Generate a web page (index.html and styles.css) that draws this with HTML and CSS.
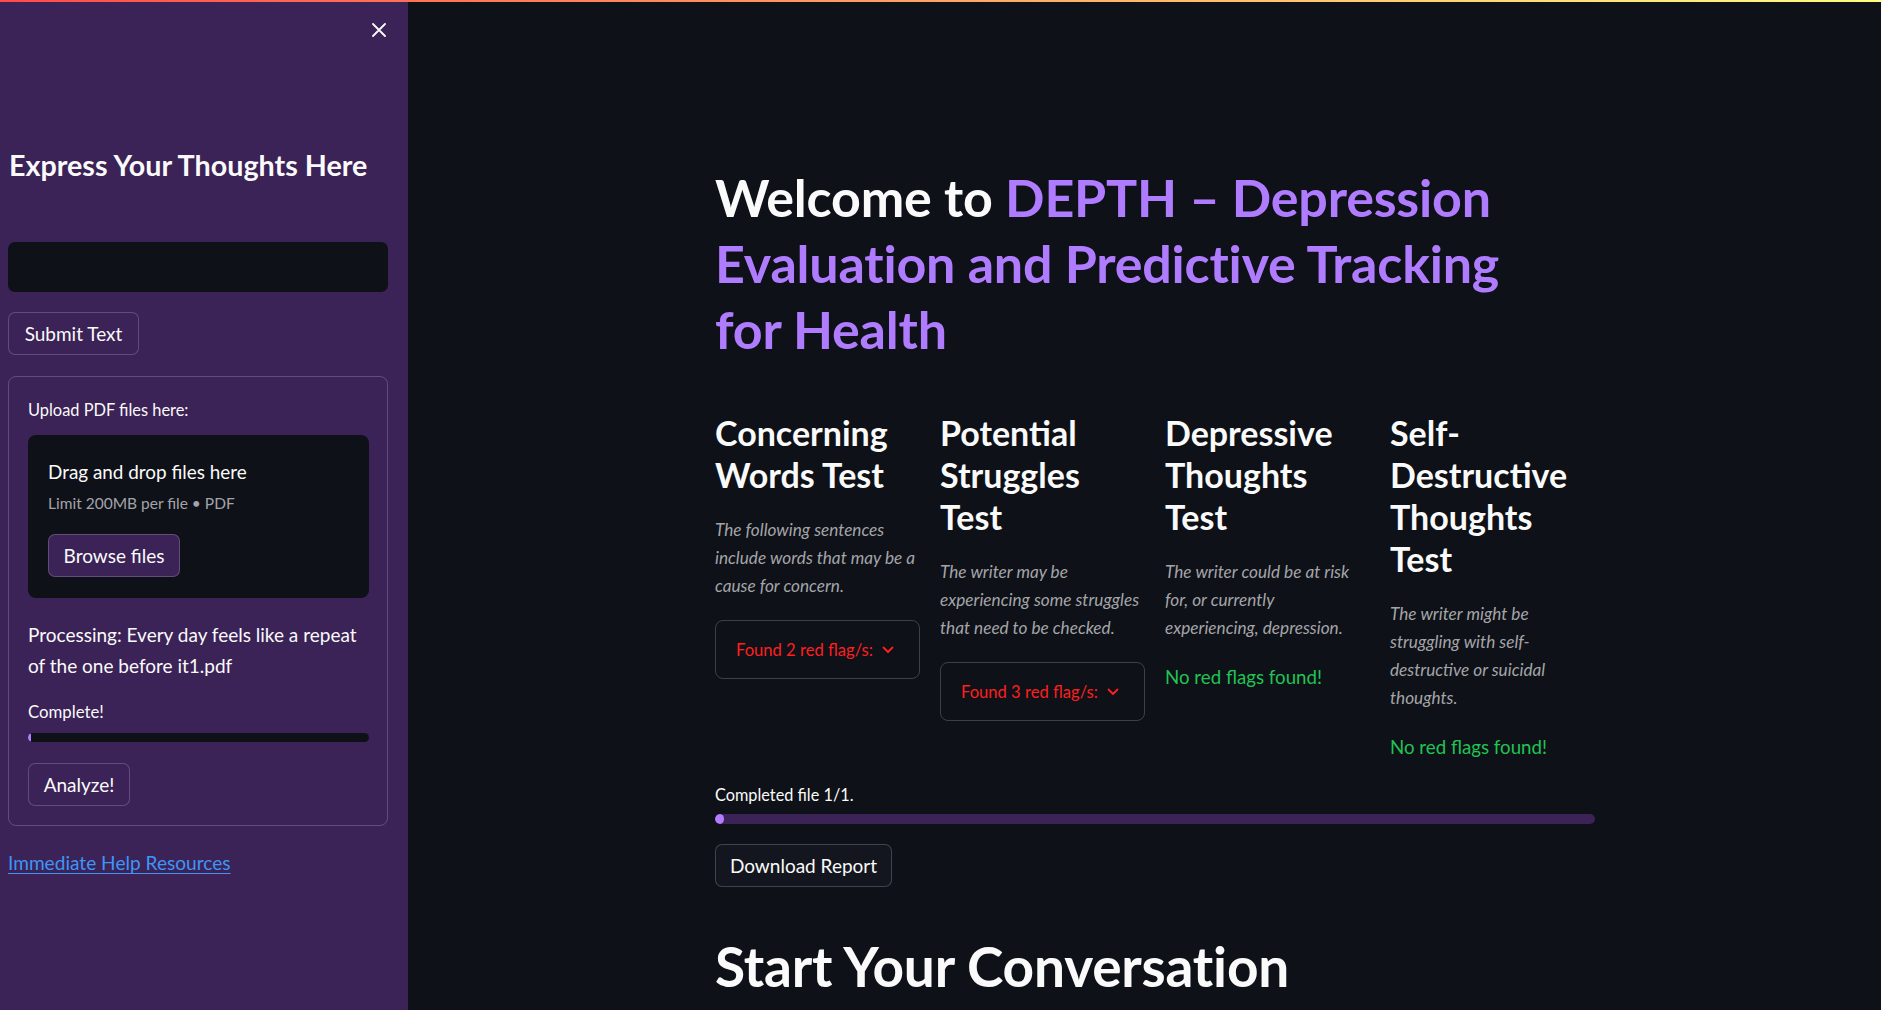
FILE: index.html
```html
<!DOCTYPE html>
<html lang="en">
<head>
<meta charset="utf-8">
<title>DEPTH</title>
<link rel="stylesheet" href="styles.css">
</head>
<body>
<div class="decoration"></div>
<div class="app">
  <aside class="sidebar">
    <div class="sidebar-top">
      <button class="close" aria-label="Close sidebar">
        <svg width="14" height="14" viewBox="0 0 14 14"><path d="M1 1L13 13M13 1L1 13" stroke="#fafafa" stroke-width="1.8" stroke-linecap="round"/></svg>
      </button>
    </div>
    <h2 class="side-title">Express Your Thoughts Here</h2>
    <div class="textbox"></div>
    <button class="btn btn-submit">Submit Text</button>
    <div class="form">
      <div class="label">Upload PDF files here:</div>
      <div class="dropzone">
        <div class="dz-title">Drag and drop files here</div>
        <div class="dz-sub">Limit 200MB per file • PDF</div>
        <button class="btn btn-browse">Browse files</button>
      </div>
      <p class="processing">Processing: Every day feels like a repeat of the one before it1.pdf</p>
      <div class="prog-label">Complete!</div>
      <div class="progress progress-dark"><div class="progress-fill"></div></div>
      <button class="btn btn-analyze">Analyze!</button>
    </div>
    <a class="help" href="#">Immediate Help Resources</a>
  </aside>

  <main class="main">
    <div class="content">
      <h1 class="title title-welcome">Welcome to <span class="accent">DEPTH – Depression</span> <span class="accent">Evaluation and Predictive Tracking</span> <span class="accent">for Health</span></h1>

      <div class="tests">
        <section class="test">
          <h3 class="test-title">Concerning Words Test</h3>
          <p class="test-desc">The following sentences include words that may be a cause for concern.</p>
          <div class="expander"><span>Found 2 red flag/s:</span>
            <svg width="12" height="8" viewBox="0 0 12 8"><path d="M1.5 1.5L6 6L10.5 1.5" fill="none" stroke="#ff1f1f" stroke-width="1.8" stroke-linecap="round" stroke-linejoin="round"/></svg>
          </div>
        </section>
        <section class="test">
          <h3 class="test-title">Potential Struggles Test</h3>
          <p class="test-desc">The writer may be experiencing some struggles that need to be checked.</p>
          <div class="expander"><span>Found 3 red flag/s:</span>
            <svg width="12" height="8" viewBox="0 0 12 8"><path d="M1.5 1.5L6 6L10.5 1.5" fill="none" stroke="#ff1f1f" stroke-width="1.8" stroke-linecap="round" stroke-linejoin="round"/></svg>
          </div>
        </section>
        <section class="test">
          <h3 class="test-title">Depressive Thoughts Test</h3>
          <p class="test-desc">The writer could be at risk for, or currently experiencing, depression.</p>
          <p class="ok">No red flags found!</p>
        </section>
        <section class="test">
          <h3 class="test-title">Self-Destructive Thoughts Test</h3>
          <p class="test-desc">The writer might be struggling with self-destructive or suicidal thoughts.</p>
          <p class="ok">No red flags found!</p>
        </section>
      </div>

      <div class="completed">Completed file 1/1.</div>
      <div class="progress progress-main"><div class="progress-fill progress-fill-main"></div></div>
      <button class="btn btn-download">Download Report</button>

      <h1 class="title title-conv">Start Your Conversation</h1>
    </div>
  </main>
</div>
</body>
</html>
```

FILE: styles.css
```css
* { box-sizing: border-box; }

html, body {
  margin: 0;
  height: 100%;
}

body {
  background: #0e1117;
  color: #fafafa;
  font-family: "Source Sans Pro", "Lato", "Noto Sans", sans-serif;
  overflow: hidden;
  position: relative;
}

.decoration {
  position: absolute;
  top: 0;
  left: 0;
  right: 0;
  height: 2px;
  background: linear-gradient(90deg, #ff4b4b, #fffd80);
  z-index: 10;
}

.app {
  display: flex;
  height: 1010px;
}

/* ---------- Sidebar ---------- */
.sidebar {
  width: 408px;
  flex: none;
  background: #3b2257;
  padding: 0 20px 0 8px;
  display: flex;
  flex-direction: column;
  align-items: flex-start;
}

.sidebar-top {
  align-self: stretch;
  display: flex;
  justify-content: flex-end;
  padding-top: 23px;
  padding-right: 2px;
}

.close {
  background: none;
  border: 0;
  padding: 0;
  width: 14px;
  height: 14px;
  display: flex;
}

.side-title {
  margin: 111px 0 0 1px;
  font-size: 28.7px;
  line-height: 34px;
  font-weight: 700;
}

.textbox {
  align-self: stretch;
  margin-top: 60px;
  height: 50px;
  background: #0e1117;
  border-radius: 7px;
}

.btn {
  font-family: inherit;
  font-size: 19px;
  color: #fafafa;
  background: #3b2257;
  border: 1px solid rgba(250, 250, 250, 0.2);
  border-radius: 7px;
  height: 43px;
  padding: 0;
  line-height: 41px;
  text-align: center;
}

.btn-submit {
  margin-top: 20px;
  width: 131px;
}

.form {
  align-self: stretch;
  margin-top: 21px;
  border: 1px solid rgba(250, 250, 250, 0.2);
  border-radius: 8px;
  padding: 21px 18px 19px 19px;
  display: flex;
  flex-direction: column;
  align-items: flex-start;
}

.label {
  font-size: 16.4px;
  line-height: 24px;
}

.dropzone {
  align-self: stretch;
  margin-top: 13px;
  background: #0e1117;
  border-radius: 8px;
  padding: 24px 20px 21px 20px;
  display: flex;
  flex-direction: column;
  align-items: flex-start;
}

.dz-title {
  font-size: 18.9px;
  line-height: 26px;
}

.dz-sub {
  margin-top: 6px;
  font-size: 15.5px;
  line-height: 24px;
  color: #a3a4ab;
}

.btn-browse {
  margin-top: 19px;
  width: 132px;
}

.processing {
  margin: 21px 0 0;
  font-size: 19px;
  line-height: 31px;
}

.prog-label {
  margin-top: 19px;
  font-size: 16.8px;
  line-height: 24px;
}

.progress {
  align-self: stretch;
  border-radius: 5px;
  overflow: hidden;
  display: flex;
}

.progress-dark {
  margin-top: 9px;
  height: 9px;
  background: #0e1117;
}

.progress-fill {
  width: 3px;
  background: #b47cff;
  border-radius: 5px;
}

.btn-analyze {
  margin-top: 21px;
  width: 102px;
}

.help {
  margin-top: 22px;
  font-size: 19.1px;
  line-height: 30px;
  color: #3f95f5;
  text-decoration: underline;
  text-underline-offset: 3px;
}

/* ---------- Main ---------- */
.main {
  flex: 1;
  padding: 164px 0 0 307px;
}

.content {
  width: 880px;
  display: flex;
  flex-direction: column;
  align-items: flex-start;
}

.title {
  margin: 0;
  font-size: 52px;
  line-height: 66px;
  font-weight: 700;
  letter-spacing: -0.2px;
}

.title-welcome {
  max-width: 850px;
}

.accent {
  color: #b07cff;
}

.tests {
  margin-top: 50px;
  align-self: stretch;
  display: grid;
  grid-template-columns: repeat(4, 1fr);
  column-gap: 20px;
  align-items: start;
}

.test {
  display: flex;
  flex-direction: column;
  align-items: stretch;
}

.test-title {
  margin: 0;
  font-size: 34px;
  line-height: 42px;
  font-weight: 700;
}

.test-desc {
  margin: 20px 0 0;
  font-size: 17.2px;
  line-height: 28px;
  font-style: italic;
  color: #a4a5a9;
}

.expander {
  margin-top: 20px;
  height: 59px;
  border: 1px solid rgba(250, 250, 250, 0.2);
  border-radius: 8px;
  padding: 0 20px;
  display: flex;
  align-items: center;
  gap: 9px;
  color: #ff1f1f;
  font-size: 16.6px;
}

.ok {
  margin: 20px 0 0;
  font-size: 18.7px;
  line-height: 31px;
  color: #21c354;
}

.completed {
  margin-top: 18px;
  font-size: 16.3px;
  line-height: 27px;
}

.progress-main {
  margin-top: 6px;
  height: 10px;
  background: #3b2257;
}

.progress-fill-main {
  width: 9px;
}

.btn-download {
  margin-top: 20px;
  width: 177px;
  background: #13161e;
}

.title-conv {
  margin-top: 46px;
  font-size: 55px;
}
```
